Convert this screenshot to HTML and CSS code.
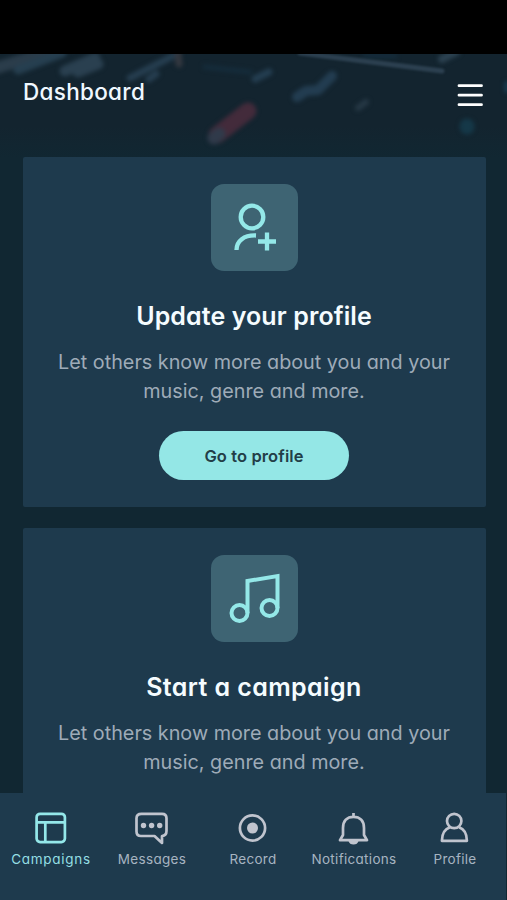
FILE: index.html
```html
<!DOCTYPE html>
<html lang="en">
<head>
    <meta charset="UTF-8">
    <title>Dashboard</title>
    <link rel="stylesheet" href="styles.css">
</head>
<body>
    <div class="app">
        <div class="status-bar"></div>

        <header class="header">
            <svg class="header-bg" viewBox="0 0 507 103" fill="none" stroke-linecap="round">
                <g class="soft">
                    <path d="M-4 14L55 -4" stroke="#2b3d4b" stroke-width="12"/>
                    <path d="M18 16L62 -1" stroke="#263f50" stroke-width="9"/>
                    <path d="M65 17L95 4M78 18L98 10" stroke="#2a4050" stroke-width="11"/>
                    <path d="M130 24L175 1M149 25L156 20" stroke="#263e50" stroke-width="7"/>
                    <path d="M178 0L179 10" stroke="#343840" stroke-width="7"/>
                    <path d="M217 81L248 57" stroke="#432b3b" stroke-width="17"/>
                    <path d="M214 84L219 80" stroke="#303a4a" stroke-width="13"/>
                    <path d="M255 25L269 18" stroke="#243e51" stroke-width="7"/>
                    <path d="M297 43L306 37L318 36L332 22" stroke="#233d51" stroke-width="10" stroke-linejoin="round"/>
                    <path d="M358 54L366 48" stroke="#263845" stroke-width="6"/>
                    <path d="M205 13L250 18M365 2L395 2" stroke="#152c3b" stroke-width="5"/>
                    <path d="M442 5L456 -2" stroke="#2c4251" stroke-width="8"/>
                    <path d="M467 72L467 73" stroke="#153848" stroke-width="15"/>
                    <path d="M507 30L507 36" stroke="#193a4e" stroke-width="6"/>
                </g>
                <path class="streak" d="M300 -1L442 17" stroke="#2c4050" stroke-width="5"/>
            </svg>
            <h1>Dashboard</h1>
            <svg class="menu" width="26" height="24" viewBox="0 0 26 24">
                <path d="M2 2.700H24.500M2 12.200H24.500M2 21.700H24.500" stroke="#fff" stroke-width="2.800" stroke-linecap="round"/>
            </svg>
        </header>

        <main class="cards">
            <section class="card">
                <div class="card-icon">
                    <svg width="87" height="87" viewBox="0 0 87 87" fill="none" stroke="#94e8e8" stroke-width="4.300">
                        <circle cx="41" cy="33" r="11.300"/>
                        <path d="M25.500 66C25.500 57 33 51 45 51.500M47 57.500H65M56 48.500V66.500"/>
                    </svg>
                </div>
                <h2>Update your profile</h2>
                <p>Let others know more about you and your<br>music, genre and more.</p>
                <button>Go to profile</button>
            </section>

            <section class="card">
                <div class="card-icon">
                    <svg width="87" height="87" viewBox="0 0 87 87" fill="none" stroke="#94e8e8" stroke-width="4">
                        <circle cx="28.500" cy="58" r="8"/>
                        <circle cx="58.500" cy="53" r="8"/>
                        <path d="M36.500 58V26L66.500 21V53"/>
                    </svg>
                </div>
                <h2 class="campaign-title">Start a campaign</h2>
                <p>Let others know more about you and your<br>music, genre and more.</p>
            </section>
        </main>

        <nav class="tabs">
            <a class="tab active">
                <svg width="36" height="36" viewBox="0 0 36 36">
                    <rect x="3.600" y="3.800" width="28.300" height="28.300" rx="3.500"/>
                    <path d="M3.600 12.300H31.900M12.300 12.300V32.300"/>
                </svg>
                <span>Campaigns</span>
            </a>
            <a class="tab">
                <svg width="36" height="36" viewBox="0 0 36 36">
                    <path d="M7.500 3.800H28Q32.500 3.800 32.500 8.300V21Q32.500 25.500 28 26V33L20.500 26H7Q2.500 26 2.500 21.500V8.300Q2.500 3.800 7.500 3.800Z"/>
                    <g class="dots"><circle cx="9.500" cy="15.500" r="2.700"/><circle cx="17.600" cy="15.500" r="2.700"/><circle cx="25.700" cy="15.500" r="2.700"/></g>
                </svg>
                <span>Messages</span>
            </a>
            <a class="tab">
                <svg width="36" height="36" viewBox="0 0 36 36">
                    <circle cx="17.500" cy="18" r="12.600"/>
                    <circle class="dots" cx="17.500" cy="18" r="5.500"/>
                </svg>
                <span>Record</span>
            </a>
            <a class="tab">
                <svg width="36" height="36" viewBox="0 0 36 36">
                    <path d="M17.500 3V7M7 25V18C7 11 11 6.800 17.500 6.800S28 11 28 18V25L31 30.200H4Z"/>
                    <path class="dots" d="M12.500 31H22.500Q21.500 34.500 17.500 34.500T12.500 31Z"/>
                </svg>
                <span>Notifications</span>
            </a>
            <a class="tab">
                <svg width="36" height="36" viewBox="0 0 36 36">
                    <circle cx="17.200" cy="11" r="7.200"/>
                    <path d="M13 17.300C8 19 5 22.500 4.900 30.800H29.900C29.800 22.500 27 19 22 17.300"/>
                </svg>
                <span>Profile</span>
            </a>
        </nav>
    </div>
</body>
</html>
```

FILE: styles.css
```css
* {
    margin: 0;
    padding: 0;
    box-sizing: border-box;
}

body {
    font-family: Inter, "Open Sans", sans-serif;
    font-feature-settings: "cv11";
    background: #112732;
    overflow: hidden;
}

.app {
    height: 900px;
    display: flex;
    flex-direction: column;
}

.status-bar {
    flex: none;
    height: 54px;
    background: #000;
}

.header {
    flex: none;
    position: relative;
    display: flex;
    justify-content: space-between;
    height: 103px;
    padding: 21px 24.5px 0 23px;
    background: linear-gradient(#13242f 70%, #112732);
    overflow: hidden;
}

.header-bg {
    position: absolute;
    top: 0;
    left: 0;
    width: 507px;
    height: 103px;
}

.soft {
    filter: blur(2px);
}

.streak {
    filter: blur(1px);
}

.header h1 {
    position: relative;
    font-size: 22.5px;
    font-weight: 500;
    line-height: 34px;
    letter-spacing: 0.3px;
    color: #f0f8ff;
}

.menu {
    position: relative;
    margin-top: 8px;
}

.cards {
    flex: 1;
    min-height: 0;
    display: flex;
    flex-direction: column;
    gap: 21.5px;
    padding: 0 21.5px 0 22.5px;
    overflow: hidden;
}

.card {
    flex: none;
    display: flex;
    flex-direction: column;
    align-items: center;
    height: 349.5px;
    padding-top: 27px;
    background: #1e3a4d;
    border-radius: 2px;
}

.card-icon {
    width: 87px;
    height: 87px;
    border-radius: 13px;
    background: #3e6473;
}

.card-icon svg {
    display: block;
}

.card h2 {
    margin-top: 27px;
    font-size: 25px;
    font-weight: 600;
    line-height: 36px;
    letter-spacing: 0.1px;
    color: #f5fcff;
    white-space: nowrap;
}

.card .campaign-title {
    letter-spacing: 0.4px;
}

.card p {
    margin-top: 14px;
    font-size: 19.8px;
    font-weight: 400;
    line-height: 28.5px;
    text-align: center;
    white-space: nowrap;
    color: #9eabb8;
}

.card button {
    width: 190px;
    height: 49px;
    margin-top: 26px;
    border: none;
    border-radius: 25px;
    background: #94e7e6;
    color: #233e48;
    font: 600 16.5px Inter, sans-serif;
    letter-spacing: 0.1px;
}

.tabs {
    flex: none;
    display: grid;
    grid-template-columns: repeat(5, 101px);
    height: 107px;
    padding-top: 17px;
    padding-left: 0.5px;
    width: 505.5px;
    background: #1e3a4d;
}

.tab {
    display: flex;
    flex-direction: column;
    align-items: center;
    font-size: 13.5px;
    line-height: 20px;
    letter-spacing: 0.3px;
    color: #a7b4c1;
    white-space: nowrap;
}

.tab svg {
    margin-bottom: 3px;
    fill: none;
    stroke: #c0c4ce;
    stroke-width: 2.7;
    stroke-linejoin: round;
}

.tab .dots {
    fill: #c0c4ce;
    stroke: none;
}

.tab.active {
    color: #94dfe4;
    letter-spacing: 0.7px;
}

.tab.active svg {
    stroke: #94e7e9;
}
```
